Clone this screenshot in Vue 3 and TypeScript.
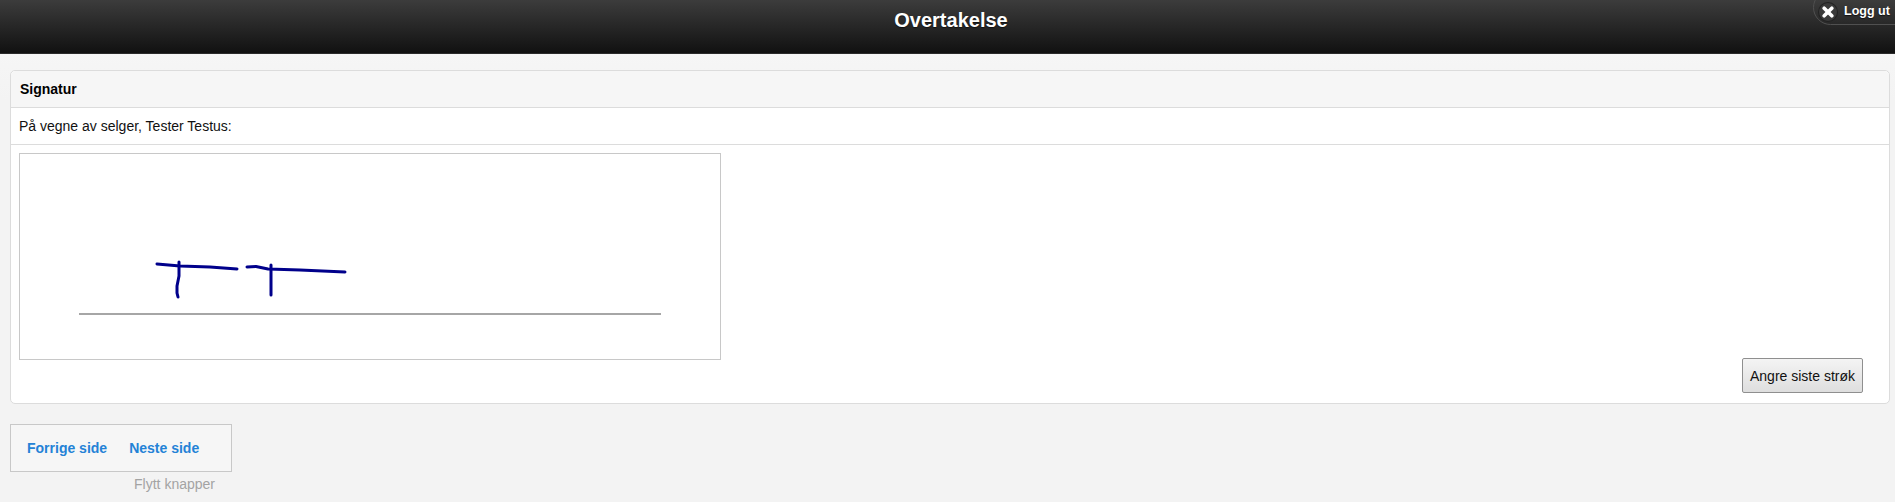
<script setup lang="ts">
const signatureStrokes: string[] = [
  'M157 264 L180 266 L210 267 L237 269',
  'M179 262 L179 276 L177 286 L177 293 L178 297',
  'M247 267 L256 266.5 L268 269 L300 270 L345 272',
  'M271 265 L271 295',
]
</script>

<template>
  <div class="page">
    <header class="topbar">
      <h1>Overtakelse</h1>
      <a class="logout">
        <span class="logout-icon">
          <svg width="12" height="12" viewBox="0 0 12 12">
            <path d="M2.2 2.2 L9.8 9.8 M9.8 2.2 L2.2 9.8" stroke="#fff" stroke-width="3.6" stroke-linecap="round" />
          </svg>
        </span>
        Logg ut
      </a>
    </header>

    <main class="content">
      <section class="panel">
        <div class="panel-title">Signatur</div>
        <div class="panel-row">På vegne av selger, Tester Testus:</div>
        <div class="panel-body">
          <div class="canvas">
            <svg width="700" height="205" viewBox="20 154 700 205">
              <path
                v-for="(d, i) in signatureStrokes"
                :key="i"
                :d="d"
                fill="none"
                stroke="#00008b"
                stroke-width="3"
                stroke-linecap="round"
                stroke-linejoin="round"
              />
              <line x1="79" y1="314" x2="661" y2="314" stroke="#a6a6a6" stroke-width="2" />
            </svg>
          </div>
          <div class="actions">
            <button type="button">Angre siste strøk</button>
          </div>
        </div>
      </section>

      <nav class="pager">
        <a>Forrige side</a>
        <a>Neste side</a>
      </nav>
      <div class="move">Flytt knapper</div>
    </main>
  </div>
</template>

<style>
body {
  background: #f3f3f3;
}
</style>

<style scoped>
.page {
  font-family: "Liberation Sans", Arial, sans-serif;
  font-size: 14px;
  color: #111;
  height: 502px;
  overflow: hidden;
  background: linear-gradient(#f9f9f9, #f3f3f3 100px);
}
.topbar {
  position: relative;
  height: 53px;
  padding-left: 7px;
  border-bottom: 1px solid #2b2b2b;
  background: linear-gradient(#3c3c3c, #111111);
  display: flex;
  justify-content: center;
}
.topbar h1 {
  margin: 9px 0 0;
  font-size: 20px;
  line-height: 23px;
  font-weight: bold;
  color: #fff;
  text-shadow: 0 1px 1px #111;
}
.logout {
  position: absolute;
  top: -10px;
  right: -20px;
  height: 35px;
  width: 102px;
  box-sizing: border-box;
  padding: 10px 0 0 5px;
  display: flex;
  align-items: flex-start;
  gap: 7px;
  border: 1px solid #505050;
  border-radius: 18px;
  color: #fff;
  font-size: 12.5px;
  font-weight: bold;
  line-height: 20px;
  text-shadow: 0 1px 1px #111;
}
.logout-icon {
  width: 18px;
  height: 18px;
  margin-top: 2px;
  border-radius: 50%;
  background: #3a3a3a;
  box-shadow: 0 0 0 1px #222;
  display: flex;
  align-items: center;
  justify-content: center;
  flex: none;
}
.content {
  padding: 16px 5px 0 10px;
}
.panel {
  border: 1px solid #dcdcdc;
  border-radius: 5px;
  background: #fff;
  height: 334px;
  box-sizing: border-box;
}
.panel-title {
  height: 36px;
  padding-left: 9px;
  line-height: 36px;
  font-size: 14px;
  font-weight: bold;
  color: #000;
  background: #f6f6f6;
  border-bottom: 1px solid #dcdcdc;
  border-radius: 5px 5px 0 0;
}
.panel-row {
  height: 36px;
  padding-left: 8px;
  line-height: 36px;
  border-bottom: 1px solid #dcdcdc;
}
.panel-body {
  padding: 8px 8px 0;
}
.canvas {
  width: 700px;
  height: 205px;
  border: 1px solid #c8c8c8;
  background: #fff;
}
.canvas svg {
  display: block;
}
.actions {
  display: flex;
  justify-content: flex-end;
  margin: -2px 18px 0 0;
}
button {
  width: 121px;
  height: 35px;
  padding: 0;
  font-family: inherit;
  font-size: 14px;
  color: #111;
  border: 1px solid #8f8f8f;
  border-radius: 2px;
  background: linear-gradient(#f4f4f4, #dedede);
}
.pager {
  margin-top: 20px;
  width: 222px;
  height: 48px;
  box-sizing: border-box;
  border: 1px solid #c8c8c8;
  background: #f6f6f6;
  display: flex;
  align-items: center;
  gap: 22px;
  padding-left: 16px;
  color: #2482d6;
  font-size: 14px;
  font-weight: bold;
}
.move {
  width: 205px;
  text-align: right;
  margin-top: 4px;
  font-size: 14px;
  line-height: 17px;
  color: #a3a3a3;
}
</style>
